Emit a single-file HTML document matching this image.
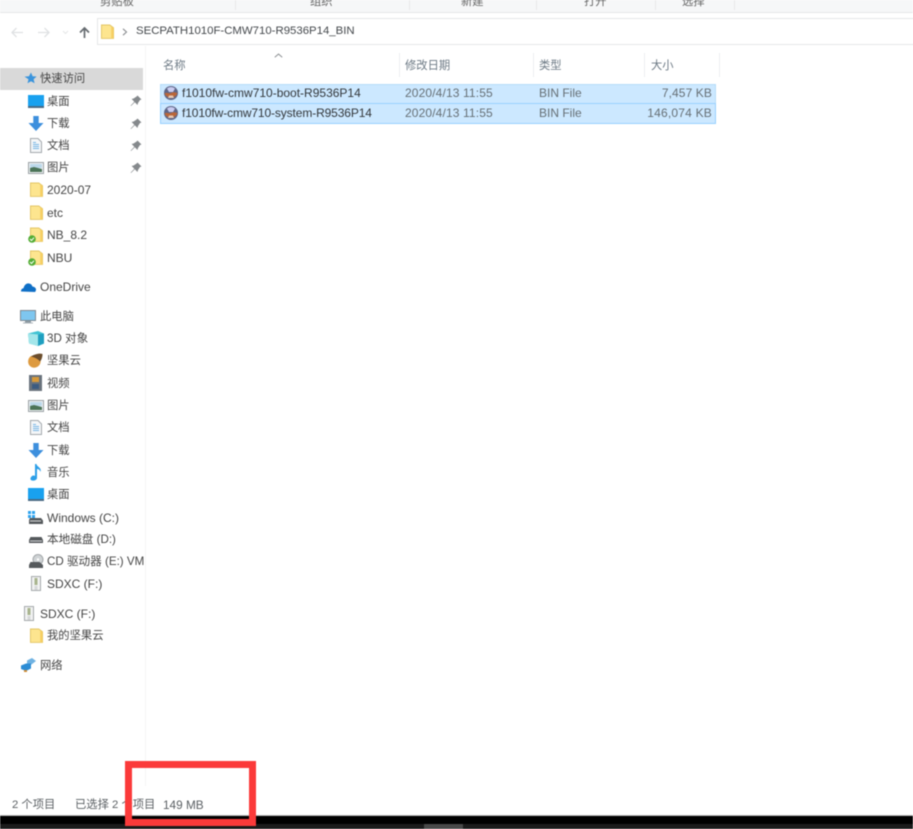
<!DOCTYPE html>
<html lang="zh-CN">
<head>
<meta charset="utf-8">
<title>SECPATH1010F-CMW710-R9536P14_BIN</title>
<style>
html,body{margin:0;padding:0;background:#fff}
#page{position:relative;width:913px;height:829px;overflow:hidden;background:#fff;font-family:"Liberation Sans","Noto Sans CJK SC",sans-serif;font-size:12px;color:#454545}
#blur{position:absolute;left:0;top:0;width:913px;height:829px;filter:blur(.55px)}
.a{position:absolute;white-space:nowrap}
.t{position:absolute;white-space:nowrap;line-height:16px;height:16px}
.z{font-size:11.3px}
.m{font-size:11.6px}
.i{position:absolute;overflow:visible}
.pin{position:absolute;left:130px;width:12px;height:12px}
.sep{position:absolute;width:1px;background:#e8e8e8}
.hs{position:absolute;top:53px;height:24px;width:1px;background:#eceff1}
.row{position:absolute;left:160px;width:556px;background:#cce8ff;box-sizing:border-box;border:1px solid #b5dcf9}
.c{position:absolute;white-space:nowrap;line-height:16px;color:#666f75}
</style>
</head>
<body>
<div id="page">
<svg width="0" height="0" style="position:absolute">
<defs>
<symbol id="folder" viewBox="0 0 14 16"><path d="M.5 1h9l4 3v11.500H.5z" fill="#fde58f" stroke="#e3c565" stroke-width="1"/><path d="M11 2.500v13h2.500V4z" fill="#f6cf63"/></symbol>
<symbol id="pin" viewBox="0 0 12 12"><path d="M7.500.5l4 4-1.500.5-2 3-.5 2L4.800 7.300 1 11l-.4-.4L4.300 6.800 1.600 4l2-.5 3-2z" fill="#85898c"/></symbol>
<symbol id="desk" viewBox="0 0 16 13"><rect x="0" y="0" width="16" height="11.500" fill="#19a1ef"/><rect x="0" y="11" width="16" height="2" fill="#4a6b85"/></symbol>
<symbol id="down" viewBox="0 0 16 15"><path d="M5.300 0h5.400v7H15.500L8 15 .5 7h4.800z" fill="#3d8fdd"/></symbol>
<symbol id="doc" viewBox="0 0 12 15"><path d="M.5.500h7.500l3.500 3.500v10.500H.500z" fill="#f4f6f8" stroke="#a4a9ad"/><path d="M3 4h3v1H3zM3 6h6v1H3zM3 8h6v1H3zM3 10h6v1H3z" fill="#78b6e6"/></symbol>
<symbol id="pic" viewBox="0 0 16 12"><rect x=".5" y=".5" width="15" height="11" fill="#f0f3f5" stroke="#9ba1a6"/><rect x="2" y="2" width="12" height="4" fill="#bcd8ea"/><path d="M2 6l4-1 8 2v3H2z" fill="#4b7458"/></symbol>
<symbol id="ok" viewBox="0 0 8 8"><circle cx="4" cy="4" r="3.800" fill="#54ad35"/><path d="M2 4l1.500 1.500L6 2.700" stroke="#fff" fill="none"/></symbol>
<symbol id="bin" viewBox="0 0 14 14"><circle cx="7" cy="7" r="7" fill="#5f6688"/><path d="M.5 7.500C3 6 5 8 7 7s4-1 6.500.3A7 7 0 0 1 .5 7.500z" fill="#b9663a"/><path d="M3 2.500a6 6 0 0 1 8 0L9 6H5z" fill="#c9cbf0"/><path d="M5 9.500h4l1 2.500H4z" fill="#e6c8b4"/></symbol>
<symbol id="drive" viewBox="0 0 14 6"><path d="M1.500 0h11L14 3v3H0V3z" fill="#55595c"/><rect x="1" y="3.500" width="12" height="1" fill="#d6d8da"/></symbol>
<symbol id="sd" viewBox="0 0 10 15"><path d="M.5.500h9v14h-9z" fill="#f1f2f2" stroke="#a6aaac"/><path d="M3.500 2h3v7h-3z" fill="#a8b48e"/><path d="M3.500 10h3v4h-3z" fill="#d6d8d9"/></symbol>
</defs>
</svg>

<div id="blur">
<!-- ribbon -->
<div class="a" style="left:0;top:0;width:913px;height:12px;background:#f6f7f8;border-bottom:1px solid #e6e7e8"></div>
<div class="sep" style="left:235px;top:0;height:10px"></div>
<div class="sep" style="left:409px;top:0;height:10px"></div>
<div class="sep" style="left:536px;top:0;height:10px"></div>
<div class="sep" style="left:655px;top:0;height:10px"></div>
<div class="sep" style="left:734px;top:0;height:10px"></div>
<div class="t z" style="left:100px;top:-6px;color:#666">剪贴板</div>
<div class="t z" style="left:310px;top:-6px;color:#666">组织</div>
<div class="t z" style="left:461px;top:-6px;color:#666">新建</div>
<div class="t z" style="left:584px;top:-6px;color:#666">打开</div>
<div class="t z" style="left:682px;top:-6px;color:#666">选择</div>

<!-- nav -->
<svg class="i" style="left:9px;top:26px" width="90" height="13" viewBox="0 0 90 13">
<path d="M3 6.500h11M7.500 2L3 6.500 7.500 11" fill="none" stroke="#dfe1e3" stroke-width="1.300"/>
<path d="M29 6.500h11M35.500 2L40 6.500 35.500 11" fill="none" stroke="#dfe1e3" stroke-width="1.300"/>
<path d="M54 5l2.500 2.500L59 5" fill="none" stroke="#e4e6e7" stroke-width="1"/>
<path d="M75.500 12V2M71 6.500L75.500 2 80 6.500" fill="none" stroke="#666b70" stroke-width="1.700"/>
</svg>
<div class="a" style="left:97px;top:18px;width:830px;height:27px;box-sizing:border-box;border:1px solid #e6e7e8;background:#fff"></div>
<svg class="i" style="left:101px;top:24px" width="13" height="15"><use href="#folder"/></svg>
<svg class="i" style="left:122px;top:28px" width="6" height="8" viewBox="0 0 6 8"><path d="M1 .8L4.500 4 1 7.200" fill="none" stroke="#8a8d90" stroke-width="1.100"/></svg>
<div class="t" style="left:136px;top:23px;color:#45494d;font-size:11.4px">SECPATH1010F-CMW710-R9536P14_BIN</div>

<!-- sidebar -->
<div class="a" style="left:0;top:68px;width:143px;height:22px;background:#d9d9d9"></div>
<div class="sep" style="left:145px;top:46px;height:740px;background:#f5f5f5"></div>

<svg class="i" style="left:24px;top:72px" width="13" height="13" viewBox="0 0 13 13"><path d="M7 .5l1.600 3.700 4 .3-3 2.700 1 4L7 9.200 3.500 11.300l1-4-4-2.700 4.500-.4z" fill="#3a94dc"/></svg>
<div class="t z" style="left:40px;top:71px">快速访问</div>

<svg class="i" style="left:28px;top:95px" width="16" height="13"><use href="#desk"/></svg>
<div class="t z" style="left:47px;top:94px">桌面</div>
<svg class="pin" style="top:95px"><use href="#pin"/></svg>

<svg class="i" style="left:28px;top:116px" width="16" height="15"><use href="#down"/></svg>
<div class="t z" style="left:47px;top:116px">下载</div>
<svg class="pin" style="top:118px"><use href="#pin"/></svg>

<svg class="i" style="left:30px;top:138px" width="12" height="15"><use href="#doc"/></svg>
<div class="t z" style="left:47px;top:138px">文档</div>
<svg class="pin" style="top:140px"><use href="#pin"/></svg>

<svg class="i" style="left:28px;top:162px" width="16" height="12"><use href="#pic"/></svg>
<div class="t z" style="left:47px;top:160px">图片</div>
<svg class="pin" style="top:162px"><use href="#pin"/></svg>

<svg class="i" style="left:30px;top:182px" width="13" height="15"><use href="#folder"/></svg>
<div class="t" style="left:47px;top:182px">2020-07</div>

<svg class="i" style="left:30px;top:205px" width="13" height="15"><use href="#folder"/></svg>
<div class="t" style="left:47px;top:205px">etc</div>

<svg class="i" style="left:30px;top:227px" width="13" height="15"><use href="#folder"/></svg>
<svg class="i" style="left:28px;top:235px" width="8" height="8"><use href="#ok"/></svg>
<div class="t" style="left:47px;top:227px">NB_8.2</div>

<svg class="i" style="left:30px;top:250px" width="13" height="15"><use href="#folder"/></svg>
<svg class="i" style="left:28px;top:258px" width="8" height="8"><use href="#ok"/></svg>
<div class="t" style="left:47px;top:250px">NBU</div>

<svg class="i" style="left:21px;top:282px" width="15" height="10" viewBox="0 0 15 10"><path d="M0 9.500c0-2 1-3 2.500-3.200C3.300 3 5.500 1 8 1.500c2 .3 3 1.500 3.400 3 2 .2 3.600 1.500 3.600 3 0 1.200-.6 2-1 2.500z" fill="#0f6fc6"/></svg>
<div class="t" style="left:40px;top:279px">OneDrive</div>

<svg class="i" style="left:20px;top:310px" width="16" height="14" viewBox="0 0 16 14"><rect x=".5" y=".5" width="15" height="10" fill="#7ec6ef" stroke="#7f8a92"/><rect x="5" y="11" width="6" height="1.500" fill="#8d9aa3"/><rect x="3" y="12.500" width="10" height="1" fill="#aab2b8"/></svg>
<div class="t z" style="left:40px;top:309px">此电脑</div>

<svg class="i" style="left:28px;top:331px" width="16" height="15" viewBox="0 0 16 15"><path d="M0 2.500L10 0l6 2.500v10L10 15 1 12.500z" fill="#3fc3d3"/><path d="M10 3.500L16 2.500v10L10 15z" fill="#1f9fc0"/><path d="M0 2.500L10 3.500V15L1 12.500z" fill="#a3e6ea"/></svg>
<div class="t m" style="left:47px;top:331px">3D 对象</div>

<svg class="i" style="left:28px;top:353px" width="15" height="15" viewBox="0 0 15 15"><path d="M3 3C0 5-.5 9 .8 11.500 2.500 14.500 6 15.500 9 14c3-1.500 4-4.500 3.500-7.500z" fill="#dd9a3f"/><path d="M3 3.500C6 1.500 11 0 14.500 1c0 3-1 6-2.500 7.500C10 6 7 4.500 3 3.500z" fill="#6b4d2c"/></svg>
<div class="t z" style="left:47px;top:353px">坚果云</div>

<svg class="i" style="left:29px;top:375px" width="13" height="16" viewBox="0 0 13 16"><rect width="13" height="16" fill="#6a737c"/><rect x="3" y="2" width="7" height="5" fill="#d79a3a"/><rect x="3" y="9" width="7" height="5" fill="#3c5c80"/></svg>
<div class="t z" style="left:47px;top:376px">视频</div>

<svg class="i" style="left:28px;top:400px" width="16" height="12"><use href="#pic"/></svg>
<div class="t z" style="left:47px;top:398px">图片</div>

<svg class="i" style="left:30px;top:420px" width="12" height="15"><use href="#doc"/></svg>
<div class="t z" style="left:47px;top:420px">文档</div>

<svg class="i" style="left:28px;top:443px" width="16" height="15"><use href="#down"/></svg>
<div class="t z" style="left:47px;top:443px">下载</div>

<svg class="i" style="left:30px;top:464px" width="12" height="17" viewBox="0 0 12 17"><path d="M5 0h1.500c.3 3 5.500 3.500 4 8C10 5.500 8 5 7 5v9c0 2-3 3-5 2.500S0 14 1.500 12.500 4 11.500 5 12z" fill="#2d9fe8"/></svg>
<div class="t z" style="left:47px;top:465px">音乐</div>

<svg class="i" style="left:28px;top:488px" width="16" height="13"><use href="#desk"/></svg>
<div class="t z" style="left:47px;top:487px">桌面</div>

<svg class="i" style="left:28px;top:511px" width="15" height="13" viewBox="0 0 15 13"><rect x="0" y="0" width="3" height="3" fill="#2fa3ee"/><rect x="4" y="0" width="3" height="3" fill="#2fa3ee"/><rect x="0" y="4" width="3" height="3" fill="#2fa3ee"/><rect x="4" y="4" width="3" height="3" fill="#2fa3ee"/><path d="M2 7h11l2 2.500V13H1V9z" fill="#55595c"/><rect x="2" y="9.500" width="11" height="1" fill="#d8dadb"/></svg>
<div class="t" style="left:47px;top:510px">Windows (C:)</div>

<svg class="i" style="left:29px;top:537px" width="14" height="6"><use href="#drive"/></svg>
<div class="t m" style="left:47px;top:532px">本地磁盘 (D:)</div>

<svg class="i" style="left:29px;top:554px" width="15" height="14" viewBox="0 0 15 14"><circle cx="9" cy="5.500" r="5" fill="#cfd3d5" stroke="#a3a7aa"/><circle cx="9" cy="5.500" r="1.200" fill="#fff"/><path d="M1.500 8h9L14 11v3H0v-3z" fill="#55595c"/></svg>
<div class="t m" style="left:47px;top:554px">CD 驱动器 (E:) VM</div>

<svg class="i" style="left:31px;top:576px" width="10" height="15"><use href="#sd"/></svg>
<div class="t" style="left:47px;top:576px">SDXC (F:)</div>

<svg class="i" style="left:24px;top:606px" width="10" height="15"><use href="#sd"/></svg>
<div class="t" style="left:40px;top:606px">SDXC (F:)</div>

<svg class="i" style="left:30px;top:628px" width="13" height="15"><use href="#folder"/></svg>
<div class="t z" style="left:47px;top:628px">我的坚果云</div>

<svg class="i" style="left:21px;top:658px" width="15" height="14" viewBox="0 0 15 14"><path d="M6 2.500L11 0l4 3-4.500 3.500H6z" fill="#6fb2e2"/><path d="M0 7.500l5-2h5v5l-5 2.500-5-2z" fill="#2b8cd5"/><rect x="3" y="12" width="3" height="2" fill="#d08c34"/></svg>
<div class="t z" style="left:40px;top:658px">网络</div>

<!-- headers -->
<svg class="i" style="left:274px;top:53px" width="9" height="5" viewBox="0 0 9 5"><path d="M.8 4.300L4.500 1l3.700 3.300" fill="none" stroke="#8b8f92" stroke-width="1"/></svg>
<div class="c z" style="left:163px;top:58px;color:#6d7a85">名称</div>
<div class="hs" style="left:399px"></div>
<div class="c z" style="left:405px;top:58px;color:#6d7a85">修改日期</div>
<div class="hs" style="left:533px"></div>
<div class="c z" style="left:539px;top:58px;color:#6d7a85">类型</div>
<div class="hs" style="left:644px"></div>
<div class="c z" style="left:651px;top:58px;color:#6d7a85">大小</div>
<div class="hs" style="left:719px"></div>

<!-- rows -->
<div class="row" style="top:84px;height:20px"></div>
<div class="row" style="top:103px;height:21px;border-color:#99d1ff"></div>

<svg class="i" style="left:164px;top:86px" width="14" height="14"><use href="#bin"/></svg>
<div class="c" style="left:182px;top:85px;color:#33373b">f1010fw-cmw710-boot-R9536P14</div>
<div class="c" style="left:405px;top:85px;letter-spacing:.13px">2020/4/13 11:55</div>
<div class="c" style="left:539px;top:85px">BIN File</div>
<div class="c" style="right:201px;top:85px;letter-spacing:.1px">7,457 KB</div>

<svg class="i" style="left:164px;top:106px" width="14" height="14"><use href="#bin"/></svg>
<div class="c" style="left:182px;top:105px;color:#33373b;letter-spacing:-.12px">f1010fw-cmw710-system-R9536P14</div>
<div class="c" style="left:405px;top:105px;letter-spacing:.13px">2020/4/13 11:55</div>
<div class="c" style="left:539px;top:105px">BIN File</div>
<div class="c" style="right:201px;top:105px;letter-spacing:.2px">146,074 KB</div>

<!-- status -->
<div class="t" style="left:12px;top:797px;color:#5a5f63;font-size:11.3px">2 个项目</div>
<div class="t" style="left:75px;top:797px;color:#5a5f63;font-size:11.3px">已选择 2 个项目</div>
<div class="t" style="left:163px;top:797px;color:#5a5f63;font-size:11.8px">149 MB</div>

<!-- bottom -->
<div class="a" style="left:0;top:815px;width:913px;height:1px;background:#b5b5b5"></div>
<div class="a" style="left:0;top:816px;width:913px;height:13px;background:#000"></div>
<div class="a" style="left:0;top:824px;width:913px;height:5px;background:#1b1b1b"></div>
<div class="a" style="left:424px;top:824px;width:39px;height:5px;background:#484848"></div>

<!-- red box -->
<div class="a" style="left:125px;top:761px;width:131px;height:65px;box-sizing:border-box;border:7px solid #fb3a3a"></div>
</div>
</div>
</body>
</html>
